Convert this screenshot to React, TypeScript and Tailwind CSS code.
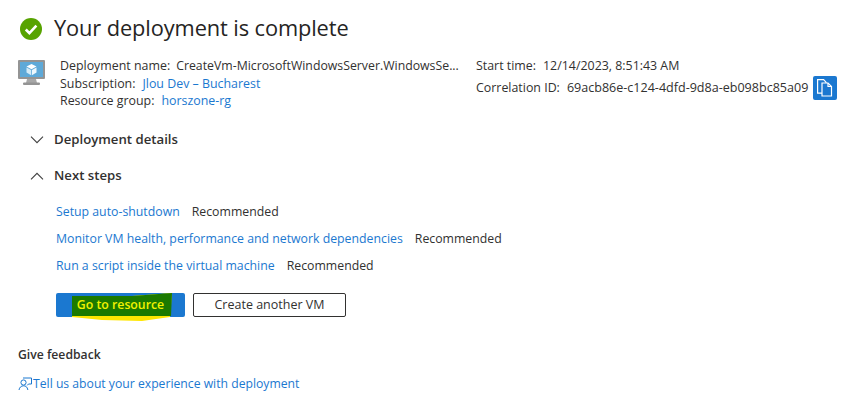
const font = { fontFamily: '"Open Sans", "Noto Sans", sans-serif' };

function Check() {
  return (
    <svg width="22" height="22" viewBox="0 0 22 22" className="shrink-0 mt-[2px]">
      <circle cx="11" cy="11" r="11" fill="#57a300" />
      <path d="M5.8 11.5l3.6 3.6 7-7.4" fill="none" stroke="#fff" strokeWidth="2.6" />
    </svg>
  );
}

function Vm() {
  return (
    <svg width="28" height="26" viewBox="0 0 28 26" className="shrink-0">
      <rect x="0" y="0" width="27" height="19" rx="1" fill="#949494" />
      <rect x="2" y="2" width="23" height="15" fill="#5ea9d8" />
      <path d="M9 19h9l1 4H8z" fill="#a8a8a8" />
      <rect x="5" y="22.5" width="17" height="2.5" rx="1" fill="#949494" />
      <path d="M13.5 4l5 2.6-5 2.6-5-2.6z" fill="#fff" />
      <path d="M8.5 7.4l4.6 2.5v5.3l-4.6-2.6z" fill="#d5ecf8" />
      <path d="M18.5 7.4l-4.6 2.5v5.3l4.6-2.6z" fill="#eef8fd" />
    </svg>
  );
}

function Copy() {
  return (
    <button className="w-6 h-6 bg-[#1b78d0] rounded-[2px] flex items-center justify-center shrink-0">
      <svg width="18" height="20" viewBox="0 0 18 20" fill="none" stroke="#fff" strokeWidth="1.2">
        <path d="M1.6 1.6h6l2.4 2.6v11H1.6z" fill="#1b78d0" />
        <path d="M6 5h6l3.5 3.5v9.500H6z" fill="#1b78d0" />
        <path d="M12 5v3.500h3.500" />
      </svg>
    </button>
  );
}

function Chevron({ up }: { up?: boolean }) {
  return (
    <svg width="14" height="8" viewBox="0 0 14 8" fill="none" stroke="#404040" strokeWidth="1.1" className="shrink-0">
      <path d={up ? "M1 7.300l6-6 6 6" : "M1 .7l6 6 6-6"} />
    </svg>
  );
}

function Feedback() {
  return (
    <svg width="14" height="14" viewBox="0 0 14 14" fill="none" stroke="#1b78d0" strokeWidth="1" className="shrink-0">
      <circle cx="5.500" cy="5.500" r="2.600" />
      <path d="M1 13c.4-2.600 2.200-4.200 4.500-4.200s3.700 1 4.400 4.200" />
      <path d="M5 1h8.500v6h-3l-1.300 1.400" />
    </svg>
  );
}

function NextStep({ label }: { label: string }) {
  return (
    <div className="flex items-center gap-3 h-[27px] text-[12.3px]">
      <span className="text-[#1b78d0]">{label}</span>
      <span className="text-[#323130]">Recommended</span>
    </div>
  );
}

export default function App() {
  return (
    <div style={font} className="w-[862px] h-[409px] bg-white text-[#323130] overflow-hidden pt-[14px] pl-[18px]">
      <div className="flex items-center gap-[12px] h-[28px] pl-[2px]">
        <Check />
        <h1 className="text-[21.8px] leading-7 tracking-[-0.1px] text-[#252423]">Your deployment is complete</h1>
      </div>

      <div className="flex mt-[15px] text-[12.4px] leading-[17.5px]">
        <div className="pt-[3px] w-[42px]">
          <Vm />
        </div>
        <div className="w-[416px]">
          <div className="flex gap-[6px] whitespace-nowrap">
            <span>Deployment name:</span>
            <span className="text-[12.3px]">CreateVm-MicrosoftWindowsServer.WindowsSe...</span>
          </div>
          <div className="flex gap-[7px]">
            <span>Subscription:</span>
            <span className="text-[#1b78d0]">Jlou Dev – Bucharest</span>
          </div>
          <div className="flex gap-[7px]">
            <span>Resource group:</span>
            <span className="text-[#1b78d0]">horszone-rg</span>
          </div>
        </div>
        <div>
          <div className="flex gap-[7px]">
            <span>Start time:</span>
            <span>12/14/2023, 8:51:43 AM</span>
          </div>
          <div className="flex items-center gap-[5px] mt-[1px] h-[24px]">
            <span className="flex gap-[7px]">
              <span>Correlation ID:</span>
              <span className="text-[12.55px]">69acb86e-c124-4dfd-9d8a-eb098bc85a09</span>
            </span>
            <Copy />
          </div>
        </div>
      </div>

      <div className="flex items-center gap-[10px] h-[20px] mt-[20.5px] pl-[12px] font-semibold text-[13.2px]">
        <Chevron />
        <span>Deployment details</span>
      </div>
      <div className="flex items-center gap-[10px] h-[20px] mt-[16px] pl-[12px] font-semibold text-[13.2px]">
        <Chevron up />
        <span>Next steps</span>
      </div>

      <div className="mt-[13px] pl-[38px]">
        <NextStep label="Setup auto-shutdown" />
        <NextStep label="Monitor VM health, performance and network dependencies" />
        <NextStep label="Run a script inside the virtual machine" />
      </div>

      <div className="flex gap-2 mt-[13px] ml-[38px] text-[12.3px] font-semibold">
        <button className="relative w-[129px] h-6 bg-[#1b78d0] rounded-[2px]">
          <svg width="100" height="28" viewBox="0 0 100 28" className="absolute left-[16px] top-0">
            <path d="M0 3 L60 3 L100 0 L98 24 L70 28 L30 27 L0 24z" fill="#ffe600" />
            <path d="M0 3 L60 3 L100 0 L99 23 L0 23z" fill="#1c7a00" />
          </svg>
          <span className="relative text-[#f2f200]">Go to resource</span>
        </button>
        <button className="w-[153px] h-6 border border-[#323130] rounded-[2px] font-normal text-[12.5px]">Create another VM</button>
      </div>

      <div className="mt-[29px] font-semibold text-[12.2px] leading-[18px]">Give feedback</div>
      <div className="flex items-center gap-[1px] mt-[11px] text-[12.2px] leading-[18px] text-[#1b78d0]">
        <Feedback />
        <span>Tell us about your experience with deployment</span>
      </div>
    </div>
  );
}
